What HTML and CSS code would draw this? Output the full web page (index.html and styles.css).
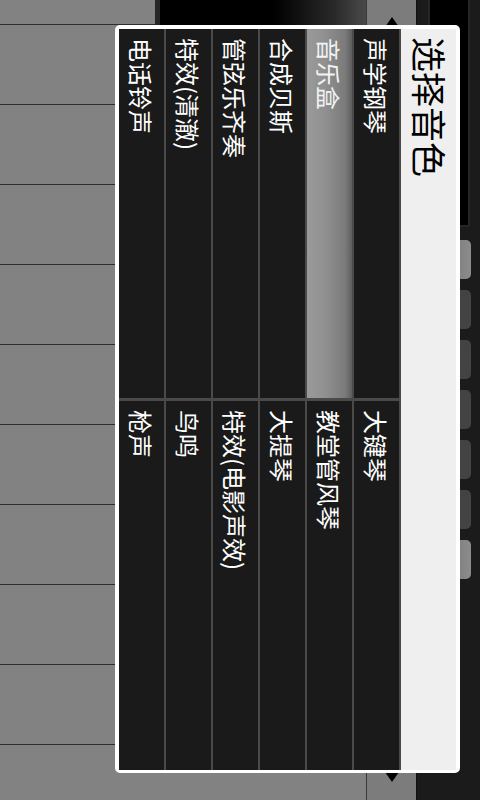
FILE: index.html
```html
<!DOCTYPE html>
<html lang="zh-CN">
<head>
<meta charset="utf-8">
<title>选择音色</title>
<link rel="stylesheet" href="styles.css">
</head>
<body>
<div class="screen">
  <div class="keys">
    <div class="key key-top"><div class="white-part"></div><div class="black-key"></div></div>
    <div class="key"></div>
    <div class="key"></div>
    <div class="key"></div>
    <div class="key"></div>
    <div class="key"></div>
    <div class="key"></div>
    <div class="key"></div>
    <div class="key"></div>
    <div class="key"></div>
    <div class="key key-last"></div>
  </div>
  <div class="nav">
    <span class="tri tri-up"></span>
    <span class="tri tri-down"></span>
  </div>
  <div class="side">
    <div class="display"></div>
    <div class="btns">
      <div class="btn on"></div>
      <div class="btn"></div>
      <div class="btn"></div>
      <div class="btn"></div>
      <div class="btn"></div>
      <div class="btn"></div>
      <div class="btn on"></div>
    </div>
  </div>
</div>
<div class="dialog">
  <div class="title">选择音色</div>
  <div class="list">
    <div class="row"><div class="cell">声学钢琴</div><div class="cell">大键琴</div></div>
    <div class="row"><div class="cell selected">音乐盒</div><div class="cell">教堂管风琴</div></div>
    <div class="row"><div class="cell">合成贝斯</div><div class="cell">大提琴</div></div>
    <div class="row"><div class="cell">管弦乐齐奏</div><div class="cell">特效(电影声效)</div></div>
    <div class="row"><div class="cell">特效(清澈)</div><div class="cell">鸟鸣</div></div>
    <div class="row"><div class="cell">电话铃声</div><div class="cell">枪声</div></div>
  </div>
</div>
</body>
</html>
```

FILE: styles.css
```css
html, body {
  margin: 0;
  padding: 0;
}
body {
  width: 480px;
  height: 800px;
  overflow: hidden;
  position: relative;
  background: #1b1b1b;
  font-family: "Noto Sans CJK SC", "Noto Sans", sans-serif;
}
.screen {
  display: flex;
  height: 800px;
}

/* piano keys */
.keys {
  width: 366px;
  display: flex;
  flex-direction: column;
  background: #828282;
}
.key {
  height: 79px;
  border-bottom: 1px solid #2e2e2e;
  flex: none;
}
.key-top {
  height: 25px;
  display: flex;
  border-bottom: none;
}
.key-top .white-part {
  width: 155px;
  border-bottom: 1px solid #2e2e2e;
}
.black-key {
  flex: 1;
  height: 30px;
  border-left: 5px solid #262626;
  background: linear-gradient(to right, #000 0%, #000 55%, #2a2a2a 85%, #4a4a4a 100%);
}
.key-last {
  flex: 1;
  border-bottom: none;
}

/* scroll arrows column */
.nav {
  width: 49px;
  background: #7c7c7c;
  border-left: 1px solid #3a3a3a;
  border-right: 1px solid #111;
  display: flex;
  flex-direction: column;
  justify-content: space-between;
  align-items: center;
}
.tri {
  width: 0;
  height: 0;
  border-left: 7px solid transparent;
  border-right: 7px solid transparent;
}
.tri-up {
  margin-top: 17px;
  border-bottom: 10px solid #000;
}
.tri-down {
  margin-bottom: 18px;
  border-top: 10px solid #000;
}

/* right side panel */
.side {
  width: 63px;
  background: #1b1b1b;
  display: flex;
  flex-direction: column;
}
.display {
  margin-left: 11px;
  width: 38px;
  height: 225px;
  background: #000;
  border: 2px solid #262626;
  border-top: none;
}
.btns {
  margin-top: 13px;
  margin-left: 14px;
  display: flex;
  flex-direction: column;
  gap: 11px;
}
.btn {
  width: 40px;
  height: 39px;
  border-radius: 5px;
  background: #434343;
}
.btn.on {
  background: linear-gradient(to right, #6a6a6a, #8c8c8c);
}

/* dialog (content is laid out in vertical-rl, glyphs turned sideways) */
.dialog {
  position: absolute;
  left: 115px;
  top: 25px;
  width: 345px;
  height: 748px;
  box-sizing: border-box;
  border: 4px solid #fff;
  border-bottom-width: 3px;
  border-radius: 5px;
  background: #efefef;
  writing-mode: vertical-rl;
  text-orientation: sideways;
  display: flex;
  flex-direction: column;
}
.title {
  width: 55px;
  flex: none;
  background: #efefef;
  color: #000;
  font-size: 35px;
  line-height: 52px;
  padding-top: 8px;
  box-sizing: border-box;
}
.list {
  width: 282px;
  flex: none;
  display: flex;
  flex-direction: column;
  background: #1a1a1a;
}
.row {
  width: 45px;
  flex: none;
  border-right: 2px solid #4a4a4a;
  background: #4a4a4a;
  display: flex;
  flex-direction: row;
  gap: 3px;
}
.cell {
  flex: 1 1 0;
  background: #1a1a1a;
  color: #fff;
  font-size: 24px;
  line-height: 45px;
  padding-top: 9px;
  white-space: nowrap;
}
.cell.selected {
  background: linear-gradient(to right, #9a9a9a 0%, #909090 40%, #7a7a7a 85%, #5e5e5e 100%);
  color: #f2f2f2;
}
```
